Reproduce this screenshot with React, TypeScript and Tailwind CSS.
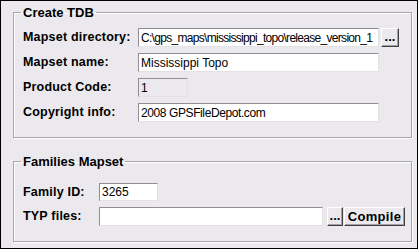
import React from "react";

const sunken =
  "h-full border border-t-[#8f8e92] border-l-[#8f8e92] border-b-[#e2e1e4] border-r-[#e2e1e4] px-[2px] text-[12px] text-black outline-none font-['Liberation_Sans',Arial,sans-serif]";

const raised =
  "h-full flex items-center justify-center border border-t-white border-l-white border-b-[#404040] border-r-[#404040] bg-[#ebe9ed] shadow-[inset_-1px_-1px_0_#a2a1a5] font-bold text-[13px] text-black leading-none";

const groupBox =
  "w-[399px] border border-[#a7a6ab] shadow-[inset_1px_1px_0_#fff,1px_1px_0_#fff] pl-[9px]";

const legendCls = "-ml-[2px] px-[2px] text-[13px] font-bold leading-[15px] text-black";

function Row({
  label,
  labelW,
  height = 19,
  children,
}: {
  label: string;
  labelW: string;
  height?: number;
  children: React.ReactNode;
}) {
  return (
    <div className={`flex items-center ${height === 18 ? "h-[18px]" : "h-[19px]"}`}>
      <span className={`${labelW} shrink-0 text-[12.5px] font-bold tracking-[0.2px] leading-none`}>
        {label}
      </span>
      {children}
    </div>
  );
}

export default function App() {
  return (
    <div className="w-[418px] h-[249px] border border-black bg-[#ebe9ed] pt-[4px] pl-[12px] text-black font-['Liberation_Sans',Arial,sans-serif]">
      {/* Create TDB */}
      <fieldset className={`${groupBox} pt-[8px] pb-[15px]`}>
        <legend className={legendCls}>Create TDB</legend>
        <div className="flex flex-col gap-[6px]">
          <Row label="Mapset directory:" labelW="w-[115px]">
            <input
              readOnly
              value="C:\gps_maps\mississippi_topo\release_version_1"
              className={`${sunken} w-[241px] bg-white tracking-[-0.7px]`}
            />
            <button className={`${raised} ml-[2px] w-[18px] items-end pb-[3px]`}>...</button>
          </Row>
          <Row label="Mapset name:" labelW="w-[115px]">
            <input readOnly value="Mississippi Topo" className={`${sunken} w-[241px] bg-white`} />
          </Row>
          <Row label="Product Code:" labelW="w-[115px]">
            <input readOnly value="1" className={`${sunken} w-[50px] bg-[#ebe9ed]`} />
          </Row>
          <Row label="Copyright info:" labelW="w-[115px]">
            <input
              readOnly
              value="2008 GPSFileDepot.com"
              className={`${sunken} w-[241px] bg-white tracking-[-0.4px]`}
            />
          </Row>
        </div>
      </fieldset>

      {/* Families Mapset */}
      <fieldset className={`${groupBox} mt-[16px] pt-[14px] pb-[15px]`}>
        <legend className={legendCls}>Families Mapset</legend>
        <div className="flex flex-col gap-[6px]">
          <Row label="Family ID:" labelW="w-[76px]" height={18}>
            <input readOnly value="3265" className={`${sunken} w-[59px] bg-white`} />
          </Row>
          <Row label="TYP files:" labelW="w-[76px]">
            <input readOnly value="" className={`${sunken} w-[224px] bg-white`} />
            <button className={`${raised} ml-[4px] w-[16px] items-end pb-[3px]`}>...</button>
            <button className={`${raised} ml-[1px] w-[61px] tracking-[0.3px]`}>Compile</button>
          </Row>
        </div>
      </fieldset>
    </div>
  );
}
